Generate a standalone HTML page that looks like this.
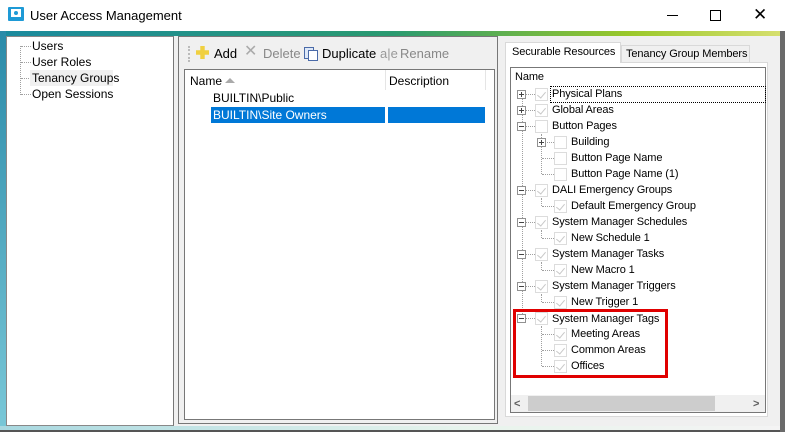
<!DOCTYPE html>
<html><head><meta charset="utf-8">
<style>
*{margin:0;padding:0;box-sizing:border-box}
body{width:785px;height:432px;overflow:hidden;position:relative;background:#f0f0f0;font-family:"Liberation Sans",sans-serif;font-size:12px;color:#000}
.a{position:absolute}
.t{position:absolute;white-space:nowrap;line-height:16px}
.r .t{font-size:11px;letter-spacing:-0.1px}
.exp{position:absolute;width:9px;height:9px;border:1px solid #919191;background:#fff}
.exp:before{content:"";position:absolute;left:1px;top:3px;width:5px;height:1px;background:#444}
.exp.p:after{content:"";position:absolute;left:3px;top:1px;width:1px;height:5px;background:#444}
.cb{position:absolute;width:13px;height:13px;border:1px solid #dcdcdc;background:#fff}
.cb.c:after{content:"";position:absolute;left:3px;top:1px;width:4px;height:7px;border-right:1.5px solid #c8c8c8;border-bottom:1.5px solid #c8c8c8;transform:rotate(40deg)}
.hd{position:absolute;border-top:1px dotted #a0a0a0;height:0}
.vd{position:absolute;border-left:1px dotted #a0a0a0;width:0}
</style></head><body>
<div class="a" style="left:0;top:0;width:785px;height:32px;background:#fff"></div>
<div class="a" style="left:8px;top:7px;width:16px;height:14px;background:#1e9ad6;border-radius:1px"></div>
<div class="a" style="left:11px;top:9px;width:10px;height:8px;background:#fff"></div>
<div class="a" style="left:14px;top:11px;width:4px;height:4px;background:#1e9ad6;border-radius:2px"></div>
<div class="t" style="left:30px;top:8px;font-size:13px">User Access Management</div>
<div class="a" style="left:667px;top:15px;width:11px;height:1px;background:#000"></div>
<div class="a" style="left:710px;top:10px;width:11px;height:11px;border:1px solid #000"></div>
<div class="t" style="left:753px;top:6px;font-size:17px;line-height:18px">✕</div>
<div class="a" style="left:0;top:31px;width:785px;height:5px;background:linear-gradient(90deg,#1b8a9e,#2a9a70 50%,#9ac82a 80%,#d8e070)"></div>
<div class="a" style="left:0;top:31px;width:6px;height:401px;background:linear-gradient(#2a8aa8,#7ac8d8)"></div>
<div class="a" style="left:0;top:426px;width:785px;height:4px;background:linear-gradient(90deg,#a8d8e0,#e8f4ec 60%,#f4f4f4)"></div>
<div class="a" style="left:0;top:430px;width:785px;height:2px;background:#555"></div>
<div class="a" style="left:780px;top:31px;width:5px;height:401px;background:#6a6a6a"></div>
<!-- left pane -->
<div class="a" style="left:6px;top:36px;width:168px;height:390px;background:#fff;border:1px solid #888;border-right:1px solid #777"></div>
<div class="vd" style="left:20px;top:46px;height:49px"></div>
<div class="hd" style="left:21px;top:46px;width:10px"></div>
<div class="hd" style="left:21px;top:62px;width:10px"></div>
<div class="hd" style="left:21px;top:78px;width:10px"></div>
<div class="hd" style="left:21px;top:94px;width:10px"></div>
<div class="t" style="left:32px;top:38px">Users</div>
<div class="t" style="left:32px;top:54px">User Roles</div>
<div class="a" style="left:30px;top:70px;width:83px;height:16px;background:#f0f0f0"></div>
<div class="t" style="left:32px;top:70px">Tenancy Groups</div>
<div class="t" style="left:32px;top:86px">Open Sessions</div>
<!-- middle panel -->
<div class="a" style="left:178px;top:36px;width:320px;height:388px;border:1px solid #777;background:#f0f0f0"></div>
<div class="vd" style="left:188px;top:46px;height:16px;border-left:2px dotted #bbb"></div>
<div class="a" style="left:196px;top:46px;width:13px;height:13px;background:#f0d040;clip-path:polygon(33% 0,67% 0,67% 33%,100% 33%,100% 67%,67% 67%,67% 100%,33% 100%,33% 67%,0 67%,0 33%,33% 33%)"></div>
<div class="t" style="left:214px;top:46px;font-size:13px">Add</div>
<div class="t" style="left:244px;top:44px;font-size:16px;color:#aaa">✕</div>
<div class="t" style="left:263px;top:46px;font-size:13px;color:#888">Delete</div>
<div class="a" style="left:304px;top:47px;width:10px;height:12px;border:1px solid #4a6aa8;background:#dde8f8"></div>
<div class="a" style="left:308px;top:50px;width:10px;height:11px;border:1px solid #4a6aa8;background:#fff"></div>
<div class="t" style="left:322px;top:46px;font-size:13px">Duplicate</div>
<div class="t" style="left:380px;top:46px;font-size:13px;color:#999">a|e</div>
<div class="t" style="left:400px;top:46px;font-size:13px;color:#888">Rename</div>
<div class="a" style="left:184px;top:69px;width:311px;height:351px;background:#fff;border:1px solid #777"></div>
<div class="a" style="left:385px;top:70px;width:1px;height:20px;background:#e5e5e5"></div>
<div class="a" style="left:485px;top:70px;width:1px;height:20px;background:#e5e5e5"></div>
<div class="t" style="left:190px;top:73px">Name</div>
<div class="a" style="left:225px;top:78px;width:0;height:0;border-left:5px solid transparent;border-right:5px solid transparent;border-bottom:5px solid #aaa"></div>
<div class="t" style="left:389px;top:73px">Description</div>
<div class="t" style="left:213px;top:90px">BUILTIN\Public</div>
<div class="a" style="left:211px;top:107px;width:174px;height:16px;background:#0078d7"></div>
<div class="a" style="left:388px;top:107px;width:97px;height:16px;background:#0078d7"></div>
<div class="t" style="left:213px;top:107px;color:#fff">BUILTIN\Site Owners</div>
<!-- right panel -->
<div class="r">
<div class="a" style="left:505px;top:62px;width:263px;height:355px;border:1px solid #d9d9d9;background:#fff"></div>
<div class="a" style="left:505px;top:42px;width:116px;height:21px;background:#fff;border:1px solid #d9d9d9;border-bottom:none"></div>
<div class="t" style="left:512px;top:44px">Securable Resources</div>
<div class="a" style="left:621px;top:45px;width:129px;height:17px;background:#f0f0f0;border:1px solid #d9d9d9;border-bottom:none"></div>
<div class="t" style="left:626px;top:46px">Tenancy Group Members</div>
<div class="a" style="left:510px;top:67px;width:256px;height:346px;border:1px solid #777;background:#fff"></div>
<div class="t" style="left:515px;top:69px">Name</div>
<div class="a" style="left:550px;top:86px;width:216px;height:17px;border:1px dotted #000"></div>
<div class="a" style="left:511px;top:395px;width:254px;height:17px;background:#f0f0f0"></div>
<div class="a" style="left:528px;top:396px;width:187px;height:15px;background:#cdcdcd"></div>
<div class="t" style="left:514px;top:396px;color:#606060;font-weight:bold">&lt;</div>
<div class="t" style="left:753px;top:396px;color:#606060;font-weight:bold">&gt;</div>
<div class="vd" style="left:522px;top:94px;height:224px"></div>
<div class="vd" style="left:541px;top:134px;height:40px"></div>
<div class="hd" style="left:542px;top:158px;width:12px"></div>
<div class="hd" style="left:542px;top:174px;width:12px"></div>
<div class="vd" style="left:541px;top:198px;height:8px"></div><div class="hd" style="left:542px;top:206px;width:12px"></div>
<div class="vd" style="left:541px;top:230px;height:8px"></div><div class="hd" style="left:542px;top:238px;width:12px"></div>
<div class="vd" style="left:541px;top:262px;height:8px"></div><div class="hd" style="left:542px;top:270px;width:12px"></div>
<div class="vd" style="left:541px;top:294px;height:8px"></div><div class="hd" style="left:542px;top:302px;width:12px"></div>
<div class="vd" style="left:541px;top:326px;height:40px"></div>
<div class="hd" style="left:542px;top:334px;width:12px"></div>
<div class="hd" style="left:542px;top:350px;width:12px"></div>
<div class="hd" style="left:542px;top:366px;width:12px"></div>
<div class="hd" style="left:526px;top:94px;width:9px"></div><div class="exp p" style="left:517px;top:90px"></div><div class="cb c" style="left:535px;top:88px"></div><div class="t" style="left:552px;top:86px">Physical Plans</div>
<div class="hd" style="left:526px;top:110px;width:9px"></div><div class="exp p" style="left:517px;top:106px"></div><div class="cb c" style="left:535px;top:104px"></div><div class="t" style="left:552px;top:102px">Global Areas</div>
<div class="hd" style="left:526px;top:126px;width:9px"></div><div class="exp" style="left:517px;top:122px"></div><div class="cb" style="left:535px;top:120px"></div><div class="t" style="left:552px;top:118px">Button Pages</div>
<div class="hd" style="left:545px;top:142px;width:9px"></div><div class="exp p" style="left:537px;top:138px"></div><div class="cb" style="left:554px;top:136px"></div><div class="t" style="left:571px;top:134px">Building</div>
<div class="cb" style="left:554px;top:152px"></div><div class="t" style="left:571px;top:150px">Button Page Name</div>
<div class="cb" style="left:554px;top:168px"></div><div class="t" style="left:571px;top:166px">Button Page Name (1)</div>
<div class="hd" style="left:526px;top:190px;width:9px"></div><div class="exp" style="left:517px;top:186px"></div><div class="cb c" style="left:535px;top:184px"></div><div class="t" style="left:552px;top:182px">DALI Emergency Groups</div>
<div class="cb c" style="left:554px;top:200px"></div><div class="t" style="left:571px;top:198px">Default Emergency Group</div>
<div class="hd" style="left:526px;top:222px;width:9px"></div><div class="exp" style="left:517px;top:218px"></div><div class="cb c" style="left:535px;top:216px"></div><div class="t" style="left:552px;top:214px">System Manager Schedules</div>
<div class="cb c" style="left:554px;top:232px"></div><div class="t" style="left:571px;top:230px">New Schedule 1</div>
<div class="hd" style="left:526px;top:254px;width:9px"></div><div class="exp" style="left:517px;top:250px"></div><div class="cb c" style="left:535px;top:248px"></div><div class="t" style="left:552px;top:246px">System Manager Tasks</div>
<div class="cb c" style="left:554px;top:264px"></div><div class="t" style="left:571px;top:262px">New Macro 1</div>
<div class="hd" style="left:526px;top:286px;width:9px"></div><div class="exp" style="left:517px;top:282px"></div><div class="cb c" style="left:535px;top:280px"></div><div class="t" style="left:552px;top:278px">System Manager Triggers</div>
<div class="cb c" style="left:554px;top:296px"></div><div class="t" style="left:571px;top:294px">New Trigger 1</div>
<div class="hd" style="left:526px;top:318px;width:9px"></div><div class="exp" style="left:517px;top:314px"></div><div class="cb c" style="left:535px;top:312px"></div><div class="t" style="left:552px;top:311px">System Manager Tags</div>
<div class="cb c" style="left:554px;top:328px"></div><div class="t" style="left:571px;top:326px">Meeting Areas</div>
<div class="cb c" style="left:554px;top:344px"></div><div class="t" style="left:571px;top:342px">Common Areas</div>
<div class="cb c" style="left:554px;top:360px"></div><div class="t" style="left:571px;top:358px">Offices</div>
<div class="a" style="left:513px;top:309px;width:155px;height:69px;border:3px solid #e00000"></div>
</div>
</body></html>
